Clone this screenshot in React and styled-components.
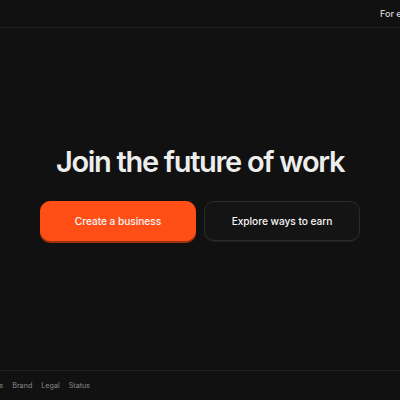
import React from "react";
import styled, { createGlobalStyle } from "styled-components";

const Global = createGlobalStyle`
  html, body { margin: 0; padding: 0; background: #111111; }
  body { font-family: Inter, "Noto Sans", sans-serif; overflow: hidden; -webkit-font-smoothing: antialiased; }
  * { box-sizing: border-box; }
`;

const Page = styled.div`
  height: 400px;
  width: 400px;
  display: flex;
  flex-direction: column;
  background: #111111;
  overflow: hidden;
`;

const Header = styled.header`
  height: 28px;
  flex: 0 0 28px;
  border-bottom: 1px solid #212121;
  display: flex;
  align-items: center;
  justify-content: flex-end;
`;

const HeaderNav = styled.nav`
  width: 20px;
  min-width: 0;
  flex-shrink: 0;
  white-space: nowrap;
  font-size: 9px;
  color: #d8d8d8;
  font-weight: 500;
`;

const Main = styled.main`
  flex: 1;
  display: flex;
  flex-direction: column;
  align-items: center;
  justify-content: center;
  padding-bottom: 12px;
`;

const Title = styled.h1`
  margin: 0 0 22px;
  font-size: 29px;
  line-height: 34px;
  font-weight: 600;
  letter-spacing: -0.045em;
  color: #ededed;
`;

const Actions = styled.div`
  display: flex;
  gap: 8px;
`;

const Button = styled.button`
  width: 156px;
  height: 40px;
  border-radius: 10px;
  font-family: Inter, sans-serif;
  font-size: 10.2px;
  font-weight: 500;
  letter-spacing: -0.005em;
  cursor: pointer;
  color: #f4f4f4;
  background: ${(p) => (p.$primary ? "#ff4f17" : "#141414")};
  border: 1px solid ${(p) => (p.$primary ? "#ff4f17" : "#2b2b2b")};
  box-shadow: ${(p) => (p.$primary ? "0 2px 0 #9c3210" : "0 1px 0 #1f1f1f")};
`;

const Footer = styled.footer`
  height: 30px;
  flex: 0 0 30px;
  border-top: 1px solid #212121;
  display: flex;
  align-items: center;
  overflow: hidden;
`;

const FooterNav = styled.nav`
  display: flex;
  gap: 9px;
  margin-left: -18px;
  white-space: nowrap;
`;

const FooterLink = styled.a`
  font-size: 7.2px;
  color: #8a8a8a;
  text-decoration: none;
`;

export default function App() {
  return (
    <Page>
      <Global />
      <Header>
        <HeaderNav>For entrepreneurs</HeaderNav>
      </Header>
      <Main>
        <Title>Join the future of work</Title>
        <Actions>
          <Button $primary>Create a business</Button>
          <Button>Explore ways to earn</Button>
        </Actions>
      </Main>
      <Footer>
        <FooterNav>
          <FooterLink>Terms</FooterLink>
          <FooterLink>Brand</FooterLink>
          <FooterLink>Legal</FooterLink>
          <FooterLink>Status</FooterLink>
        </FooterNav>
      </Footer>
    </Page>
  );
}
